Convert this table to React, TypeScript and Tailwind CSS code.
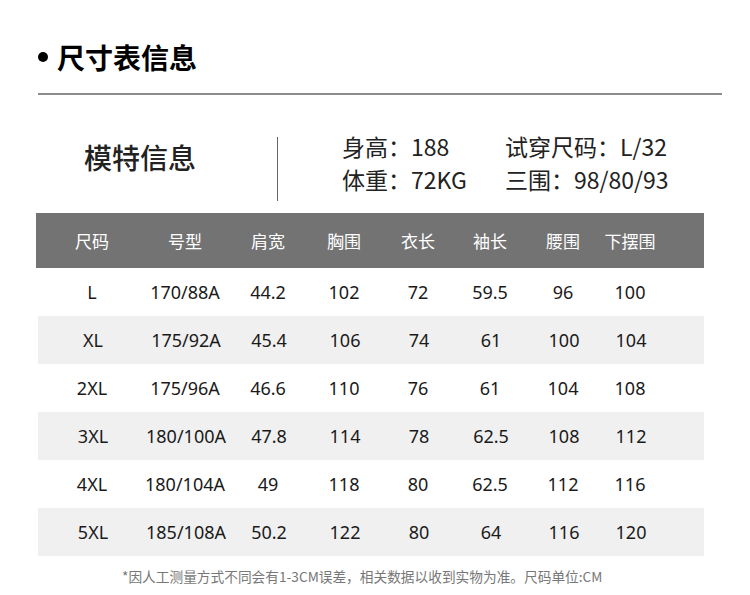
const cols = "grid grid-cols-[112px_74px_92px_60px_88px_56px_90px_44px_1fr]";

const headers = ["尺码", "号型", "肩宽", "胸围", "衣长", "袖长", "腰围", "下摆围"];

const rows = [
  ["L", "170/88A", "44.2", "102", "72", "59.5", "96", "100"],
  ["XL", "175/92A", "45.4", "106", "74", "61", "100", "104"],
  ["2XL", "175/96A", "46.6", "110", "76", "61", "104", "108"],
  ["3XL", "180/100A", "47.8", "114", "78", "62.5", "108", "112"],
  ["4XL", "180/104A", "49", "118", "80", "62.5", "112", "116"],
  ["5XL", "185/108A", "50.2", "122", "80", "64", "116", "120"],
];

export default function App() {
  return (
    <div className="w-[750px] h-[595px] bg-white overflow-hidden font-['Noto_Sans','Noto_Sans_CJK_SC',sans-serif] text-[#1a1a1a]">
      {/* title */}
      <div className="pt-[43px] pl-[38px] flex items-center h-[71px] text-[28px] leading-[28px] font-bold text-black font-['Noto_Sans_CJK_SC',sans-serif]">
        <div className="w-[10px] h-[10px] rounded-full bg-black" />
        <span className="ml-[9px]">尺寸表信息</span>
      </div>
      <div className="mt-[22px] ml-[38px] w-[684px] h-[2px] bg-[#8c8c8c]" />

      {/* model info */}
      <div className="flex items-start h-[118px] font-['Noto_Sans_CJK_SC',sans-serif]">
        <div className="ml-[84px] mt-[48px] text-[28px] leading-[28px] font-medium text-[#222]">模特信息</div>
        <div className="ml-[81px] mt-[42px] w-px h-[64px] bg-[#666]" />
        <div className="ml-[64px] mt-[35px] grid grid-cols-[163px_auto] text-[23px] leading-[33px] text-[#222]">
          <span>身高：188</span>
          <span>试穿尺码：L/32</span>
          <span>体重：72KG</span>
          <span>三围：98/80/93</span>
        </div>
      </div>

      {/* table */}
      <div className="ml-[36px] w-[668px]">
        <div className={`${cols} h-[55px] items-center bg-[#737373] text-white text-[17px] font-['Noto_Sans_CJK_SC',sans-serif]`}>
          {headers.map((h) => (
            <div key={h} className="flex justify-center whitespace-nowrap">{h}</div>
          ))}
        </div>
        {rows.map((r, i) => (
          <div
            key={r[0]}
            className={`${cols} h-[48px] items-center text-[18px] ${i % 2 === 1 ? "bg-[#f0f0f0] ml-[2px]" : ""}`}
          >
            {r.map((c, j) => (
              <div key={j} className={`flex justify-center whitespace-nowrap ${i % 2 === 1 ? "-ml-[2px]" : ""}`}>
                {c}
              </div>
            ))}
          </div>
        ))}
      </div>

      <div className="mt-[10px] ml-[122px] text-[13.7px] leading-[20px] text-[#777] whitespace-nowrap font-['Noto_Sans_CJK_SC',sans-serif]">
        *因人工测量方式不同会有1-3CM误差，相关数据以收到实物为准。尺码单位:CM
      </div>
    </div>
  );
}
